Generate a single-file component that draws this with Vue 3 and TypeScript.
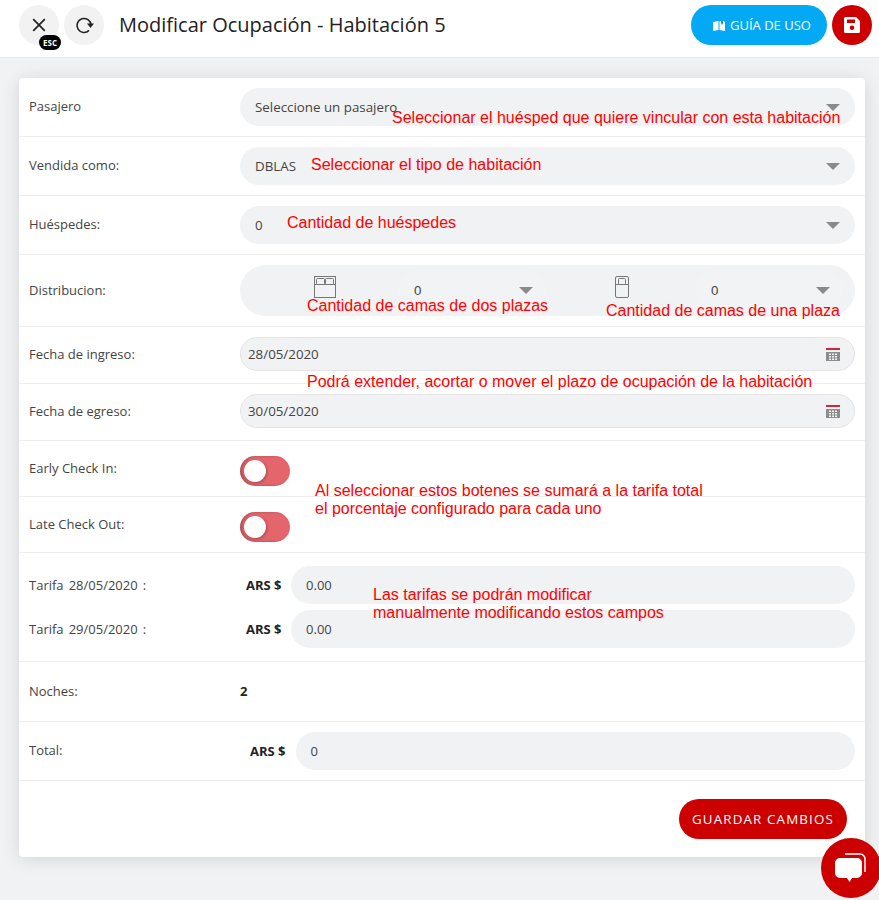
<template>
  <div class="page">
    <header class="topbar">
      <div class="topbar-left">
        <button class="round-btn esc-btn" aria-label="Cerrar">
          <svg width="16" height="16" viewBox="0 0 16 16"><path d="M2.200 2.200l11.600 11.600M13.800 2.200L2.200 13.800" stroke="#222" stroke-width="1.700" fill="none" /></svg>
          <span class="esc">ESC</span>
        </button>
        <button class="round-btn" aria-label="Actualizar">
          <svg width="20" height="20" viewBox="0 0 20 20"><path d="M17 10A7 7 0 1 0 15 15.400" stroke="#222" stroke-width="1.600" fill="none" /><path d="M13 8.500h7L16.500 13z" fill="#222" /></svg>
        </button>
        <h1 class="title">Modificar Ocupación - Habitación 5</h1>
      </div>
      <div class="topbar-right">
        <button class="guide-btn">
          <svg width="12" height="11" viewBox="0 0 12 11"><path d="M0 2l5.500-1v9L0 11zM6.500 1.500L8 .8v4l1-1 1 1V.5l2 1.500v9l-5.500-1z" fill="#fff" /></svg>
          <span>GUÍA DE USO</span>
        </button>
        <button class="save-btn" aria-label="Guardar">
          <svg width="16" height="16" viewBox="0 0 16 16"><path fill-rule="evenodd" d="M1.500 0h10.500L16 4v10.500a1.500 1.500 0 0 1-1.500 1.500h-13A1.500 1.500 0 0 1 0 14.500v-13A1.500 1.500 0 0 1 1.500 0zM3 2.500v3.500h8V2.500zM8 8.500a2.300 2.300 0 1 0 0 4.600 2.300 2.300 0 0 0 0-4.600z" fill="#fff" /></svg>
        </button>
      </div>
    </header>

    <main class="content">
      <section class="card">
        <div class="row">
          <label class="label raised">Pasajero</label>
          <div class="select"><span>Seleccione un pasajero</span><i class="caret"></i></div>
        </div>
        <div class="row">
          <label class="label raised">Vendida como:</label>
          <div class="select"><span>DBLAS</span><i class="caret"></i></div>
        </div>
        <div class="row">
          <label class="label raised">Huéspedes:</label>
          <div class="select"><span>0</span><i class="caret"></i></div>
        </div>
        <div class="row">
          <label class="label raised">Distribucion:</label>
          <div class="dist">
            <div class="dist-col first">
              <svg width="22" height="22" viewBox="0 0 22 22" class="bed-icon"><g fill="none" stroke="#777" stroke-width="1"><rect x=".5" y=".5" width="21" height="21" /><path d="M.5 8.500h21" /><rect x="2.500" y="2.500" width="8" height="6" rx="1" /><rect x="11.500" y="2.500" width="8" height="6" rx="1" /></g></svg>
              <div class="mini-select"><span>0</span><i class="caret"></i></div>
            </div>
            <div class="dist-col second">
              <svg width="14" height="22" viewBox="0 0 14 22" class="bed-icon"><g fill="none" stroke="#777" stroke-width="1"><rect x=".5" y=".5" width="13" height="21" rx="1.500" /><path d="M.5 8.500h13" /><rect x="3.500" y="2.500" width="7" height="6" rx="1" /></g></svg>
              <div class="mini-select"><span>0</span><i class="caret"></i></div>
            </div>
          </div>
        </div>
        <div class="row date-row">
          <label class="label">Fecha de ingreso:</label>
          <div class="date"><span>28/05/2020</span><CalendarGlyph /></div>
        </div>
        <div class="row date-row">
          <label class="label">Fecha de egreso:</label>
          <div class="date"><span>30/05/2020</span><CalendarGlyph /></div>
        </div>
        <div class="row toggle-row">
          <label class="label">Early Check In:</label>
          <div class="toggle"><span class="knob"></span></div>
        </div>
        <div class="row toggle-row">
          <label class="label">Late Check Out:</label>
          <div class="toggle"><span class="knob"></span></div>
        </div>
        <div class="row rates">
          <div v-for="rate in rates" :key="rate" class="rate">
            <label class="label">Tarifa {{ rate }} :</label>
            <strong class="currency">ARS $</strong>
            <div class="input">0.00</div>
          </div>
        </div>
        <div class="row nights">
          <label class="label raised">Noches:</label>
          <strong class="nights-value">2</strong>
        </div>
        <div class="row total">
          <label class="label">Total:</label>
          <strong class="currency">ARS $</strong>
          <div class="input total-input">0</div>
        </div>
        <div class="footer">
          <button class="submit">GUARDAR CAMBIOS</button>
        </div>

        <span
          v-for="note in notes"
          :key="note.text"
          class="note"
          :style="{ left: note.x + 'px', top: note.y + 'px' }"
        >{{ note.text }}</span>
      </section>
    </main>

    <button class="chat" aria-label="Chat">
      <svg width="32" height="31" viewBox="0 0 32 31">
        <path d="M10 1h15a5 5 0 0 1 5 5v13" fill="none" stroke="#fff" stroke-width="1.500" />
        <path d="M5 5h17a5 5 0 0 1 5 5v10a5 5 0 0 1-5 5h-5l-2.500 4-2.500-4H5a5 5 0 0 1-5-5V10a5 5 0 0 1 5-5z" fill="#fff" />
      </svg>
    </button>
  </div>
</template>

<script setup lang="ts">
import { defineComponent, h } from "vue";

const CalendarGlyph = defineComponent({
  render() {
    return h("svg", { width: 14, height: 13, viewBox: "0 0 14 13", class: "cal" }, [
      h("rect", { x: 0, y: 0, width: 14, height: 2, fill: "#cc2a3a" }),
      h("path", {
        fill: "#8c8c8c",
        "fill-rule": "evenodd",
        d: "M0 4h14v9H0zM3 5.500v1.500h2V5.500zM6 5.500v1.500h2V5.500zM9 5.500v1.500h2V5.500zM3 8v1.500h2V8zM6 8v1.500h2V8zM9 8v1.500h2V8zM3 10.500V12h2v-1.500zM6 10.500V12h2v-1.500zM9 10.500V12h2v-1.500z",
      }),
    ]);
  },
});

const rates = ["28/05/2020", "29/05/2020"];

// Notas rojas sobre la captura, relativas a la tarjeta
const notes = [
  { x: 373, y: 31, text: "Seleccionar el huésped que quiere vincular con esta habitación" },
  { x: 292, y: 78, text: "Seleccionar el tipo de habitación" },
  { x: 268, y: 136, text: "Cantidad de huéspedes" },
  { x: 288, y: 219, text: "Cantidad de camas de dos plazas" },
  { x: 587, y: 224, text: "Cantidad de camas de una plaza" },
  { x: 288, y: 295, text: "Podrá extender, acortar o mover el plazo de ocupación de la habitación" },
  { x: 296, y: 404, text: "Al seleccionar estos botenes se sumará a la tarifa total\nel porcentaje configurado para cada uno" },
  { x: 354, y: 508, text: "Las tarifas se podrán modificar\nmanualmente modificando estos campos" },
];
</script>

<style>
html,
body {
  background: #f1f2f4;
}
</style>

<style scoped>
.page {
  position: relative;
  width: 879px;
  height: 900px;
  overflow: hidden;
  font-family: "Open Sans", sans-serif;
  color: #444;
  background: #f1f2f4;
}

button {
  border: 0;
  padding: 0;
  font-family: inherit;
  cursor: pointer;
}

.topbar {
  display: flex;
  justify-content: space-between;
  align-items: flex-start;
  height: 58px;
  padding: 5px 7px 0 19px;
  box-sizing: border-box;
  background: #fff;
  border-bottom: 1px solid #e9e9e9;
}

.topbar-left,
.topbar-right {
  display: flex;
  align-items: center;
}

.topbar-right {
  gap: 5px;
}

.round-btn {
  position: relative;
  display: flex;
  align-items: center;
  justify-content: center;
  width: 40px;
  height: 40px;
  margin-right: 5px;
  border-radius: 50%;
  background: #f2f2f2;
}

.esc {
  position: absolute;
  left: 20px;
  top: 30px;
  width: 22px;
  height: 15px;
  border-radius: 8px;
  background: #000;
  color: #fff;
  font-size: 8px;
  font-weight: 700;
  line-height: 15px;
  text-align: center;
}

.title {
  margin: -2px 0 0 10px;
  font-size: 20px;
  font-weight: 400;
  color: #222;
}

.guide-btn {
  display: flex;
  align-items: center;
  gap: 5px;
  width: 136px;
  height: 40px;
  padding-left: 22px;
  box-sizing: border-box;
  border-radius: 20px;
  background: #03a9f4;
  color: #fff;
  font-size: 13px;
}

.save-btn {
  display: flex;
  align-items: center;
  justify-content: center;
  width: 40px;
  height: 40px;
  border-radius: 50%;
  background: #cc0000;
}

.content {
  padding: 20px 14px 0 19px;
}

.card {
  position: relative;
  height: 779px;
  border-radius: 4px;
  background: #fff;
  box-shadow: 0 2px 18px rgba(0, 0, 0, 0.12);
}

.row {
  display: flex;
  align-items: center;
  padding: 10px;
  border-bottom: 1px solid #eee;
}

.label {
  flex: 0 0 211px;
  font-size: 13px;
  color: #444;
}

.raised {
  margin-top: -2px;
}

.select {
  flex: 1;
  display: flex;
  align-items: center;
  justify-content: space-between;
  height: 38px;
  padding: 0 15px;
  border-radius: 19px;
  background: #f1f2f3;
  font-size: 13.330px;
  color: #444;
}

.caret {
  display: block;
  width: 0;
  height: 0;
  border-left: 7px solid transparent;
  border-right: 7px solid transparent;
  border-top: 7px solid #8a8a8a;
}

.dist {
  flex: 1;
  display: flex;
  height: 51px;
  border-radius: 26px;
  background: #f1f2f3;
}

.dist-col {
  display: flex;
  flex: none;
  align-items: center;
  height: 100%;
}

.first {
  padding-left: 74px;
}

.first .mini-select {
  margin-left: 62px;
}

.second {
  padding-left: 69px;
}

.second .mini-select {
  margin-left: 66px;
}

.bed-icon {
  flex: none;
  margin-top: -8px;
}

.mini-select {
  display: flex;
  align-items: center;
  justify-content: space-between;
  flex: none;
  width: 148px;
  height: 41px;
  padding: 0 13px 0 16px;
  box-sizing: border-box;
  border-radius: 20px;
  background: #f2f3f4;
  font-family: "Liberation Sans", sans-serif;
  font-size: 13.330px;
  color: #444;
}

.date-row {
  padding: 10px 10px 12px;
}

.date {
  flex: 1;
  display: flex;
  align-items: center;
  justify-content: space-between;
  height: 34px;
  padding: 0 14px 0 7px;
  box-sizing: border-box;
  border: 1px solid #e4e4e4;
  border-radius: 17px;
  background: #f1f2f3;
  font-size: 13.330px;
  color: #444;
}

.cal {
  display: block;
}

.toggle-row {
  padding: 15px 10px 10px;
}

.toggle-row .label {
  margin-top: -6px;
}

.toggle {
  position: relative;
  width: 50px;
  height: 30px;
  border-radius: 15px;
  background: #e4666c;
  box-shadow: inset 2px 0 3px rgba(0, 0, 0, 0.25);
}

.knob {
  position: absolute;
  left: 4px;
  top: 4px;
  width: 22px;
  height: 22px;
  border-radius: 50%;
  background: #fff;
  box-shadow: 1px 1px 3px rgba(0, 0, 0, 0.3);
}

.rates {
  display: flex;
  flex-direction: column;
  align-items: stretch;
  gap: 6px;
  padding: 13px 10px;
}

.rate {
  display: flex;
  align-items: center;
}

.rate .label {
  word-spacing: 1.700px;
}

.currency {
  flex: none;
  margin-right: 10px;
  font-size: 13px;
  font-weight: 700;
  color: #222;
}

.rate .currency {
  margin-left: 6px;
  margin-right: 9.500px;
}

.total .currency {
  margin-left: 10px;
}

.total .label {
  margin-top: -2px;
}

.input {
  flex: 1;
  height: 38px;
  padding-left: 15px;
  border-radius: 19px;
  background: #f1f2f3;
  font-size: 13px;
  line-height: 38px;
  color: #444;
}

.nights {
  height: 60px;
  padding: 0 10px;
  box-sizing: border-box;
}

.nights-value {
  margin-top: -2px;
  font-size: 13px;
  color: #222;
}

.footer {
  display: flex;
  justify-content: flex-end;
  padding: 18px;
}

.submit {
  width: 168px;
  height: 40px;
  border-radius: 20px;
  background: #cc0000;
  color: #fff;
  font-size: 13.330px;
  letter-spacing: 1.150px;
}

.note {
  position: absolute;
  white-space: pre;
  font-family: "Liberation Sans", sans-serif;
  font-size: 16px;
  line-height: 18px;
  color: #ff0000;
}

.chat {
  position: absolute;
  left: 821px;
  top: 838px;
  display: flex;
  align-items: center;
  justify-content: center;
  width: 60px;
  height: 60px;
  border-radius: 50%;
  background: #cc0000;
}
</style>
